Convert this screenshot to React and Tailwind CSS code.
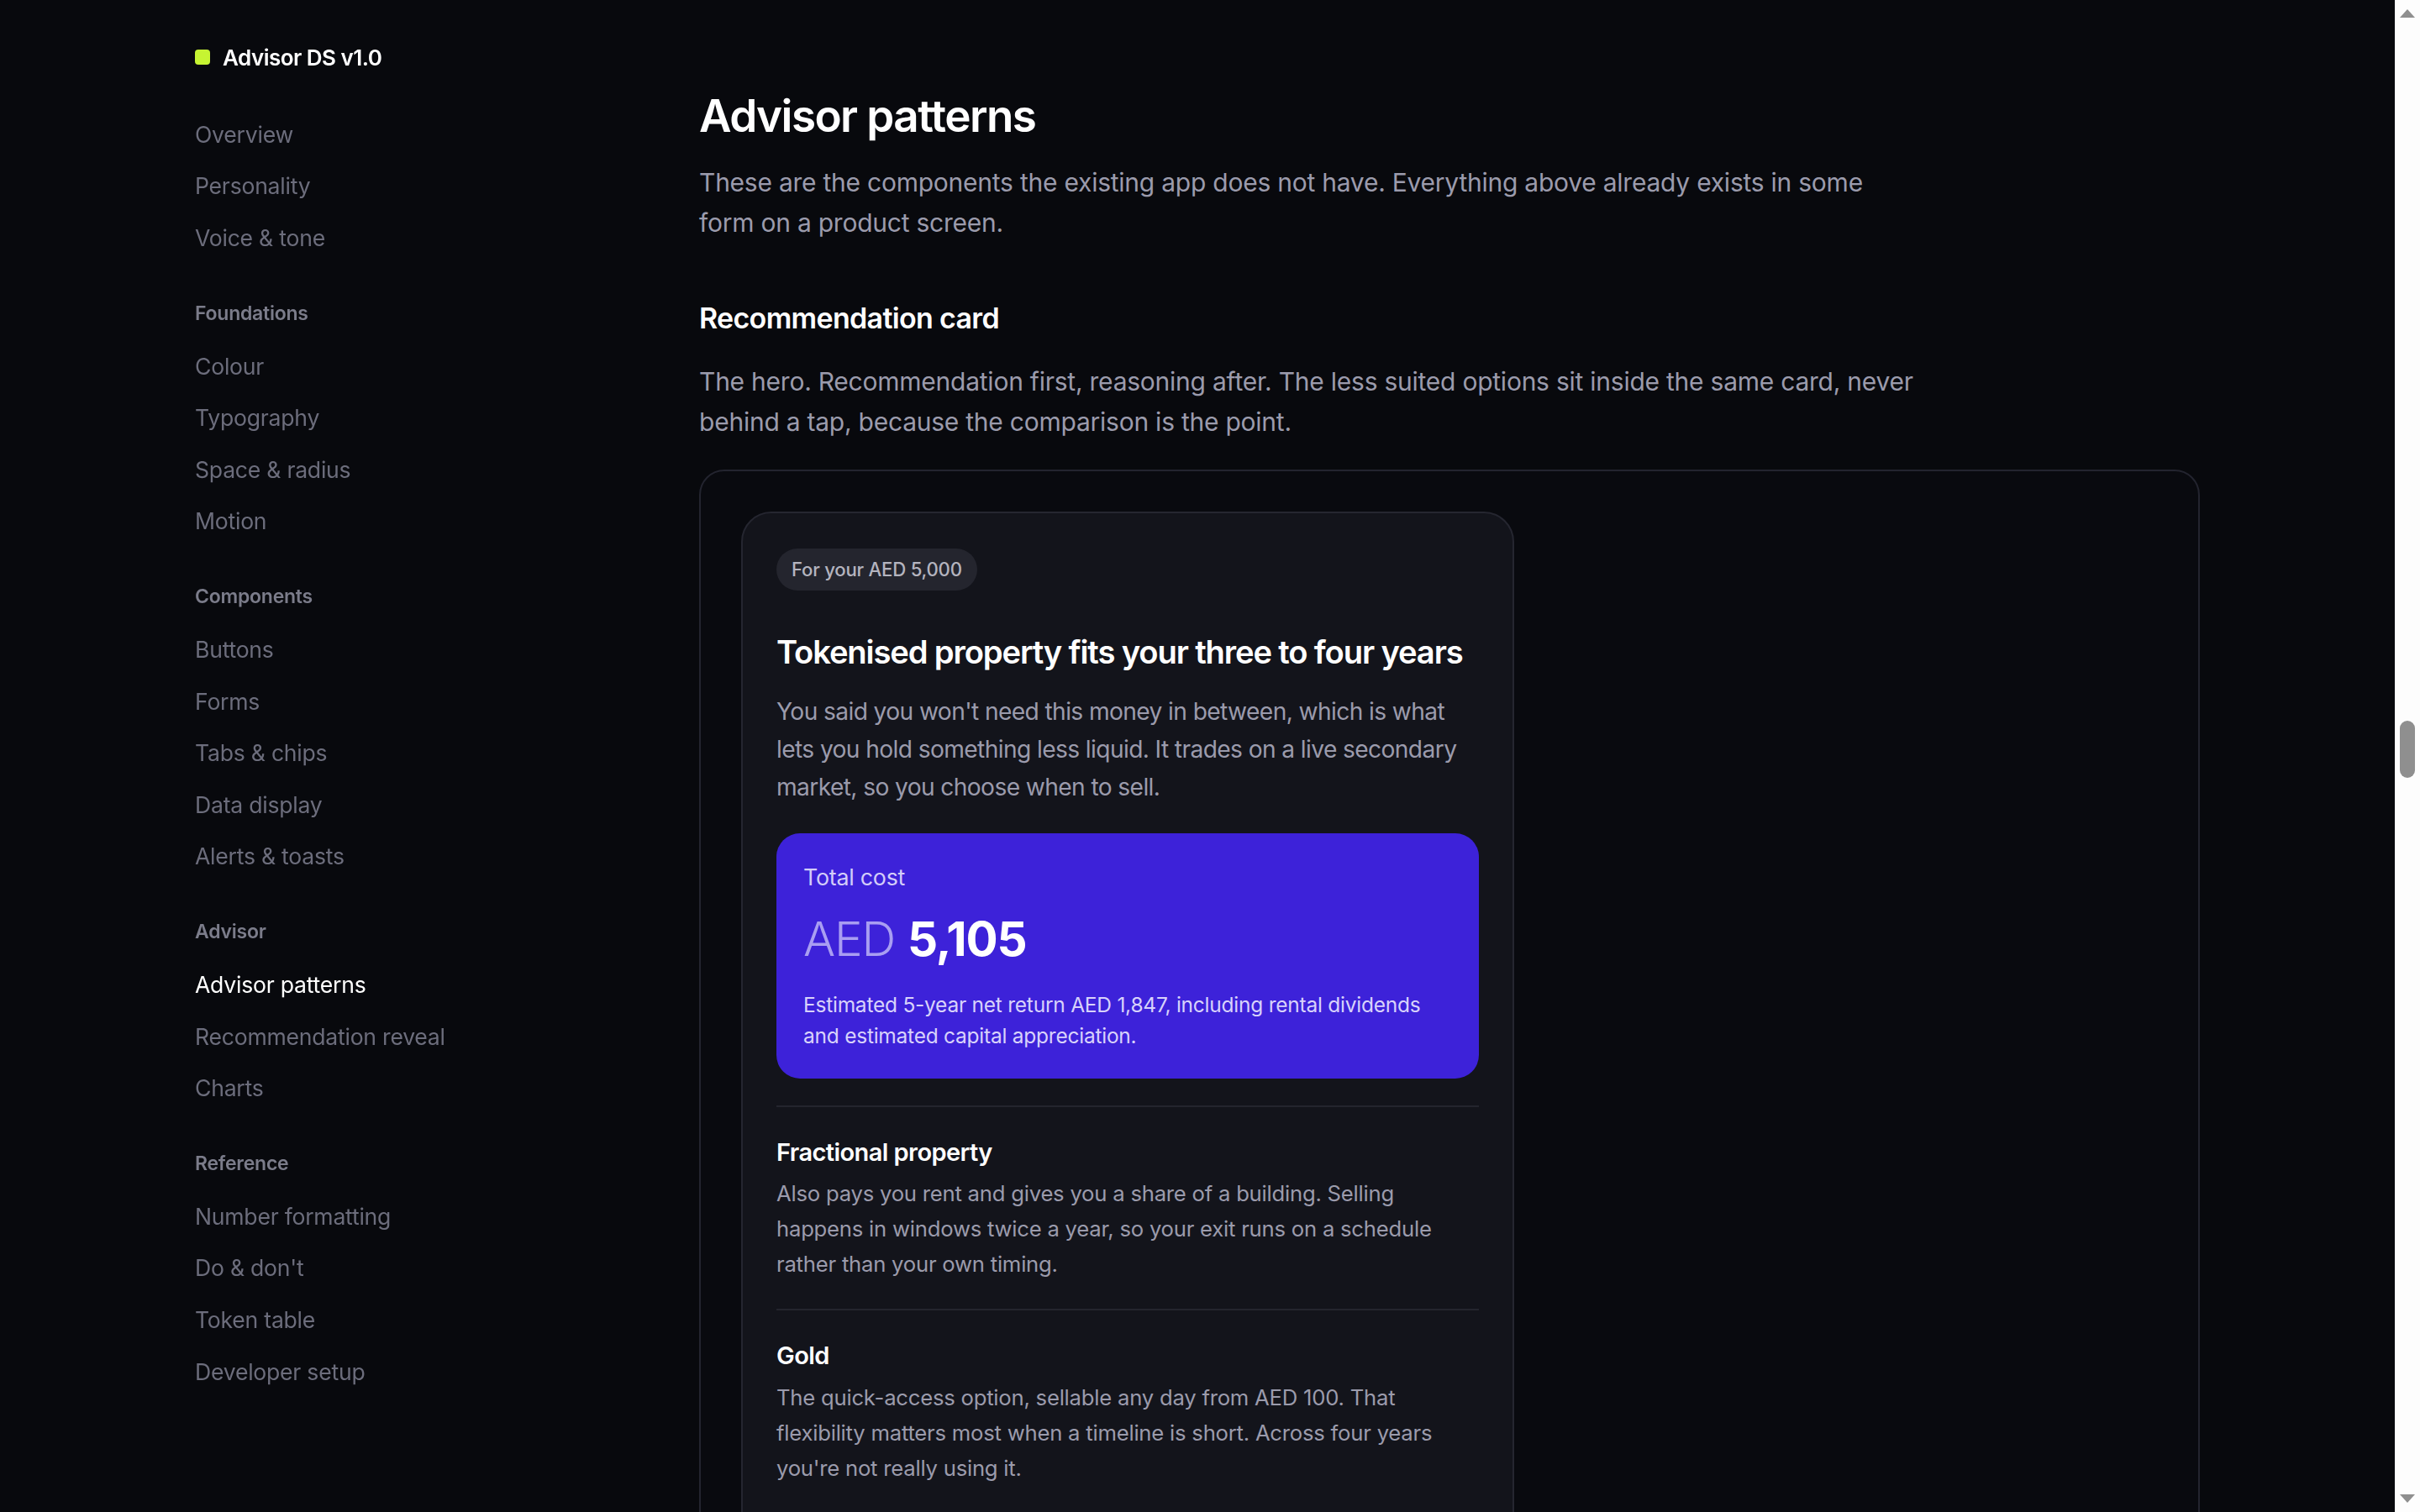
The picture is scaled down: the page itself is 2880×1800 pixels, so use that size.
import React from 'react';

const groups = [
  { label: null, items: ['Overview', 'Personality', 'Voice & tone'] },
  { label: 'Foundations', items: ['Colour', 'Typography', 'Space & radius', 'Motion'] },
  { label: 'Components', items: ['Buttons', 'Forms', 'Tabs & chips', 'Data display', 'Alerts & toasts'] },
  { label: 'Advisor', items: ['Advisor patterns', 'Recommendation reveal', 'Charts'] },
  { label: 'Reference', items: ['Number formatting', "Do & don't", 'Token table', 'Developer setup'] },
];

const options = [
  {
    name: 'Fractional property',
    body: 'Also pays you rent and gives you a share of a building. Selling happens in windows twice a year, so your exit runs on a schedule rather than your own timing.',
  },
  {
    name: 'Gold',
    body: "The quick-access option, sellable any day from AED 100. That flexibility matters most when a timeline is short. Across four years you're not really using it.",
  },
];

const Sidebar = () => (
  <aside className="w-[600px] shrink-0 sticky top-0 self-start pt-12">
    <div className="flex items-center gap-[15px] h-10">
      <span className="w-[18px] h-[18px] rounded-[4px] bg-[#c6f432]"></span>
      <span className="text-[26px] font-semibold text-white tracking-[-0.02em]">Advisor DS v1.0</span>
    </div>
    <nav className="mt-[42px]">
      {groups.map((g, gi) => (
        <div key={gi}>
          {g.label && (
            <div className="mt-[42px] mb-[17px] h-8 leading-8 text-[23px] font-semibold text-[#7b7c8a]">
              {g.label}
            </div>
          )}
          {g.items.map((item) => (
            <div
              key={item}
              className={`h-[61.6px] flex items-center text-[26.6px] ${item === 'Advisor patterns' ? 'text-white' : 'text-[#6c6d7c]'}`}
            >
              {item}
            </div>
          ))}
        </div>
      ))}
    </nav>
  </aside>
);

const RecommendationCard = () => (
  <div className="w-[920px] rounded-[36px] border-2 border-[#252630] bg-[#13141b] px-10 pt-[42px] pb-10">
    <span className="inline-flex items-center h-[50px] px-[18px] rounded-full bg-[#24252e] text-[22.2px] font-medium text-[#b4b4bf]">
      For your AED 5,000
    </span>
    <h4 className="mt-[45px] text-[38.2px] leading-[56px] font-semibold text-white tracking-[-0.03em]">
      Tokenised property fits your three to four years
    </h4>
    <p className="mt-[21px] text-[28.2px] leading-[45px] tracking-[-0.022em] text-[#9b9bac]">
      You said you won't need this money in between, which is what lets you hold something less liquid. It trades on a live secondary market, so you choose when to sell.
    </p>
    <div className="mt-8 rounded-[28px] bg-[#3d22d9] p-8">
      <div className="text-[26.8px] leading-10 text-[#d3cdf9]">Total cost</div>
      <div className="mt-[17.6px] text-[56.6px] leading-[72px] tracking-[-0.02em]">
        <span className="font-light text-[#a99ef2]">AED</span>{' '}
        <span className="font-bold text-white">5,105</span>
      </div>
      <p className="mt-[24.6px] text-[24.5px] leading-[36.8px] text-[#d8d2fb]">
        Estimated 5-year net return AED 1,847, including rental dividends and estimated capital appreciation.
      </p>
    </div>
    <div className="mt-8">
      {options.map((o) => (
        <div key={o.name} className="border-t-2 border-[#24252e] pt-8 pb-8">
          <div className="text-[29px] leading-[44px] font-semibold text-white tracking-[-0.02em]">{o.name}</div>
          <p className="mt-[6.6px] text-[25.7px] leading-[42px] text-[#9b9bac]">{o.body}</p>
        </div>
      ))}
    </div>
  </div>
);

const Scrollbar = () => (
  <div className="w-[30px] shrink-0 h-screen bg-[#fdfdfd] flex flex-col items-center justify-between py-[11px]">
    <svg width="18" height="10" viewBox="0 0 18 10">
      <path d="M0 10 L9 0 L18 10 Z" fill="#8f8f8f" />
    </svg>
    <div className="w-[18px] h-[68px] rounded-[9px] bg-[#8f8f8f] mb-[16px]"></div>
    <svg width="18" height="10" viewBox="0 0 18 10">
      <path d="M0 0 L9 10 L18 0 Z" fill="#8f8f8f" />
    </svg>
  </div>
);

export default function App() {
  return (
    <div
      className="h-screen flex bg-[#08090d] text-white tracking-[-0.015em]"
      style={{ fontFamily: 'Inter, "Noto Sans", sans-serif' }}
    >
      <div className="flex-1 min-w-0 h-screen overflow-hidden">
        <div className="flex px-[232px]">
          <Sidebar />
          <main className="flex-1 pt-[104px] pb-48">
            <h1 className="text-[53px] leading-[68px] font-semibold tracking-[-0.03em] text-white">Advisor patterns</h1>
            <p className="mt-[21px] max-w-[1400px] text-[30px] leading-[48px] text-[#9b9bac]">
              These are the components the existing app does not have. Everything above already exists in some form on a product screen.
            </p>
            <h3 className="mt-[66px] text-[34px] leading-[48px] font-semibold text-white tracking-[-0.02em]">Recommendation card</h3>
            <p className="mt-[27px] max-w-[1460px] text-[30px] leading-[48px] text-[#9b9bac]">
              The hero. Recommendation first, reasoning after. The less suited options sit inside the same card, never behind a tap, because the comparison is the point.
            </p>
            <div className="mt-[33px] rounded-[30px] border-2 border-[#23242f] bg-[#090a0f] p-12">
              <RecommendationCard />
            </div>
          </main>
        </div>
      </div>
      <Scrollbar />
    </div>
  );
}
